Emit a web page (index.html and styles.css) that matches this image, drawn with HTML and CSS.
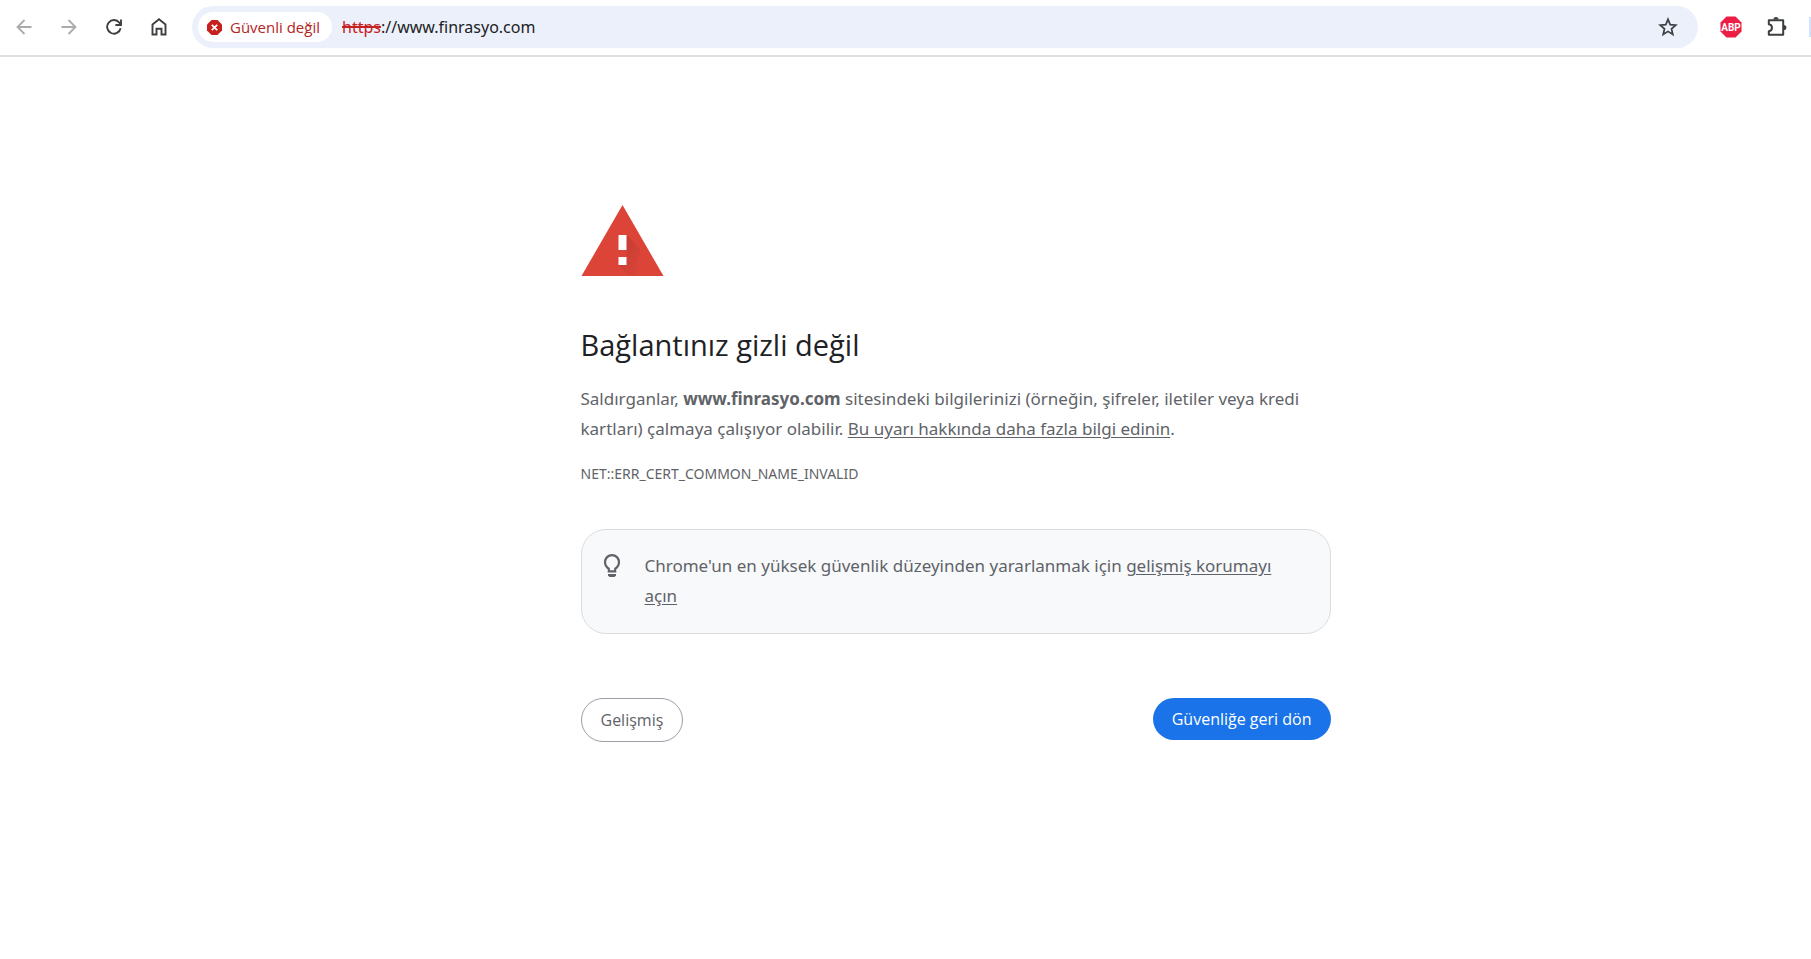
FILE: index.html
```html
<!DOCTYPE html>
<html lang="tr">
<head>
<meta charset="utf-8">
<title>Gizlilik hatası</title>
<link rel="stylesheet" href="styles.css">
</head>
<body>
<header class="toolbar">
  <nav class="nav-buttons">
    <button class="icon-button is-disabled" type="button" aria-label="Geri" disabled>
      <svg width="16" height="16" viewBox="0 0 16 16"><path d="M15.500 8H1.500M8.500 1 1.500 8l7 7" fill="none" stroke="currentColor" stroke-width="1.800"/></svg>
    </button>
    <button class="icon-button is-disabled" type="button" aria-label="İleri" disabled>
      <svg width="16" height="16" viewBox="0 0 16 16"><path d="M.5 8h14M7.500 1l7 7-7 7" fill="none" stroke="currentColor" stroke-width="1.800"/></svg>
    </button>
    <button class="icon-button" type="button" aria-label="Yenile">
      <svg width="16" height="16" viewBox="0 0 16 16"><path d="M14.600 9.200A6.800 6.800 0 1 1 13.400 3.800L14.300 5" fill="none" stroke="currentColor" stroke-width="1.900"/><path d="M15 .6V6H9.400" fill="none" stroke="currentColor" stroke-width="1.900"/></svg>
    </button>
    <button class="icon-button" type="button" aria-label="Ana sayfa">
      <svg width="16" height="18" viewBox="0 0 16 18"><path d="M1.500 6.400 8 1.300l6.500 5.100V16.500h-4v-5.700h-5v5.700h-4z" fill="none" stroke="currentColor" stroke-width="1.900"/></svg>
    </button>
  </nav>
  <div class="address-bar">
    <button class="security-chip" type="button">
      <svg width="15" height="15" viewBox="0 0 15 15"><path d="M4.500 0h6L15 4.500v6L10.500 15h-6L0 10.500v-6z" fill="#c5221f"/><path d="m4.800 4.800 5.400 5.400m0-5.400-5.400 5.400" stroke="#fff" stroke-width="1.700"/></svg>
      <span>Güvenli değil</span>
    </button>
    <div class="url"><s class="scheme">https</s>://www.finrasyo.com</div>
    <button class="icon-button" type="button" aria-label="Yer işareti ekle">
      <svg width="20" height="20" viewBox="0 0 20 20"><path d="m10 2.300 2.200 5.300 5.600.5-4.300 3.700 1.300 5.600L10 14.400l-4.800 3 1.300-5.600L2.200 8.100l5.600-.5z" fill="none" stroke="currentColor" stroke-width="1.700"/></svg>
    </button>
  </div>
  <div class="extensions">
    <button class="icon-button" type="button" aria-label="Adblock Plus">
      <svg width="22" height="22" viewBox="0 0 22 22"><path d="M6.500.5h9l6 6v9l-6 6h-9l-6-6v-9z" fill="#ed1e45"/><text class="badge-text" x="11" y="14.500" text-anchor="middle" fill="#fff">ABP</text></svg>
    </button>
    <button class="icon-button" type="button" aria-label="Uzantılar">
      <svg width="22" height="22" viewBox="0 0 22 22"><path d="M2.800 4.200H17.200V18.800H2.800V15.200C7 14.800 7 8.600 2.800 8.200z" fill="none" stroke="currentColor" stroke-width="2" stroke-linejoin="round"/><path d="M7.400 3.600a2.600 2.600 0 0 1 5.200 0zM17.800 8.900a2.600 2.600 0 0 1 0 5.200z" fill="currentColor"/></svg>
    </button>
  </div>
  <span class="side-button"></span>
</header>
<div class="page">
<main class="interstitial">
  <svg class="warning-icon" viewBox="0 0 90 90" aria-hidden="true">
    <defs>
      <linearGradient id="shade" x1="0" y1="0" x2="1" y2="1"><stop offset="0" stop-color="#b83830"/><stop offset="1" stop-color="#db4437"/></linearGradient>
    </defs>
    <path d="M41.500 10 82.500 81H.5z" fill="#db4437"/>
    <path d="m45.500 40 14 14-4 17-10-10zM45.500 62l13 13-3 5h-8L37.500 70z" fill="url(#shade)" opacity=".75"/>
    <path d="M37.500 40h8v15h-8zM37.500 62h8v8h-8z" fill="#fff"/>
  </svg>
  <h1 class="title">Bağlantınız gizli değil</h1>
  <p class="message">Saldırganlar, <strong>www.finrasyo.com</strong> sitesindeki bilgilerinizi (örneğin, şifreler, iletiler veya kredi kartları) çalmaya çalışıyor olabilir. <a href="#bilgi">Bu uyarı hakkında daha fazla bilgi edinin</a>.</p>
  <p class="error-code">NET::ERR_CERT_COMMON_NAME_INVALID</p>
  <section class="promo">
    <svg class="bulb" width="18" height="25" viewBox="0 0 18 25" aria-hidden="true"><path d="M5.800 18.300v-2.600C3.300 14.300 2 12.100 2 9.100a7 7 0 0 1 14 0c0 3-1.300 5.200-3.800 6.600v2.600z" fill="none" stroke="currentColor" stroke-width="2.200"/><path d="M5 21h8v1.500l-1.500 1.500h-5L5 22.500z" fill="currentColor"/></svg>
    <p class="promo-text">Chrome'un en yüksek güvenlik düzeyinden yararlanmak için <a href="#koruma">gelişmiş korumayı açın</a></p>
  </section>
  <div class="actions">
    <button class="button button-secondary" type="button">Gelişmiş</button>
    <button class="button button-primary" type="button">Güvenliğe geri dön</button>
  </div>
</main>
</div>
</body>
</html>
```
FILE: styles.css
```css
* {
  box-sizing: border-box;
}

body {
  margin: 0;
  background: #fff;
  color: #5f6368;
  font-family: "Noto Sans", "Open Sans", sans-serif;
}

button {
  border: 0;
  padding: 0;
  background: none;
  font: inherit;
}

.toolbar {
  display: flex;
  align-items: center;
  height: 57px;
  padding-bottom: 1px;
  border-bottom: 2px solid #dedfe0;
  color: #3c4043;
}

.nav-buttons {
  display: flex;
  gap: 13px;
  padding: 0 17px 0 8px;
}

.icon-button {
  display: flex;
  flex: none;
  align-items: center;
  justify-content: center;
  width: 32px;
  height: 32px;
  color: #3c4043;
}

.is-disabled {
  color: #a9abad;
}

.address-bar {
  display: flex;
  flex: 1;
  align-items: center;
  height: 42px;
  padding: 0 14px 0 6px;
  border-radius: 21px;
  background: #ebf0fa;
}

.security-chip {
  display: flex;
  align-items: center;
  gap: 8px;
  height: 30px;
  padding: 0 12px 0 9px;
  border-radius: 15px;
  background: #fff;
  color: #b3261e;
  font-family: "Open Sans", sans-serif;
  font-size: 15px;
  font-weight: 500;
  white-space: nowrap;
}

.url {
  flex: 1;
  padding-left: 10px;
  color: #202124;
  font-size: 16px;
}

.scheme {
  color: #c5221f;
  text-decoration-thickness: 2px;
}

.extensions {
  display: flex;
  gap: 14px;
  padding: 0 16px 0 17px;
}

.badge-text {
  font-family: Roboto, sans-serif;
  font-size: 10px;
  font-weight: 700;
}

.side-button {
  width: 2px;
  height: 20px;
  background: #d3e3fd;
}

.page {
  padding: 138px 0 60px 100px;
}

.interstitial {
  max-width: 750px;
  margin: 0 auto;
}

.warning-icon {
  display: block;
  width: 90px;
  height: 90px;
}

.title {
  margin: 41px 0 20px;
  color: #202124;
  font-family: "Open Sans", sans-serif;
  font-size: 29px;
  font-weight: 400;
  line-height: 38px;
}

.message,
.promo-text {
  margin: 0;
  font-size: 17px;
  line-height: 30px;
}

.message a,
.promo-text a {
  color: inherit;
  text-underline-offset: 2px;
}

.error-code {
  margin: 20px 0 45px;
  font-size: 14px;
  line-height: 20px;
}

.promo {
  display: flex;
  gap: 24px;
  padding: 21px 24px 22px 21px;
  border: 1px solid #dadce0;
  border-radius: 25px;
  background: #f8f9fb;
}

.bulb {
  flex: none;
  margin-top: 2px;
}

.actions {
  display: flex;
  align-items: flex-start;
  justify-content: space-between;
  margin-top: 64px;
}

.button {
  height: 42px;
  padding: 0 19px;
  border-radius: 22px;
  font-family: "Open Sans", sans-serif;
  font-size: 16px;
}

.button-secondary {
  height: 44px;
  border: 1px solid #9aa0a6;
  color: #5f6368;
}

.button-primary {
  background: #1a73e8;
  color: #fff;
}
```
